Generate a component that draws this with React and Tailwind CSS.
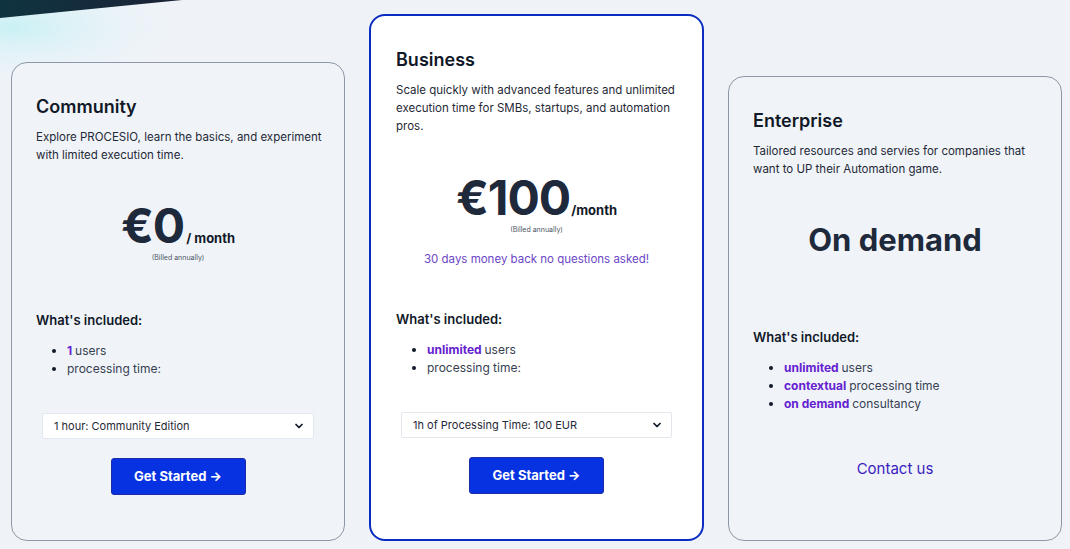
import { ChevronDown } from 'lucide-react';

const font = { fontFamily: 'Inter, "Noto Sans", sans-serif' };

function Select({ label }) {
  return (
    <div className="relative flex items-center h-[26px] bg-white border border-[#e3e7ee] rounded-[2px] pl-[11px] pr-[8px] text-[11px] text-[#1f2937]">
      <span className="flex-1">{label}</span>
      <ChevronDown className="w-[12px] h-[12px] text-[#111827]" strokeWidth={3.5} />
    </div>
  );
}

function Button() {
  return (
    <div className="flex justify-center">
      <button className="w-[135px] h-[37px] bg-[#0632e2] border border-[#1c2ca6] rounded-[3px] text-white text-[13px] font-bold">
        Get Started →
      </button>
    </div>
  );
}

function Included({ items }) {
  return (
    <>
      <h3 className="text-[13px] font-semibold text-[#111827] leading-[18px]">What's included:</h3>
      <ul className="list-disc pl-[31px] mt-[13px] text-[12px] leading-[18px] text-[#374151] marker:text-[#111827]">
        {items.map((it, i) => (
          <li key={i}>
            {it.bold && <span className="font-bold text-[#6421d0]">{it.bold} </span>}
            {it.text}
          </li>
        ))}
      </ul>
    </>
  );
}

export default function App() {
  return (
    <div style={font} className="relative w-[1070px] h-[549px] overflow-hidden bg-[#eff3f8]">
      {/* top-left decoration */}
      <svg className="absolute left-0 top-0" width="260" height="90" viewBox="0 0 260 90">
        <defs>
          <radialGradient id="glow" cx="0.05" cy="0.3" r="0.7">
            <stop offset="0" stopColor="#c9f1f5" />
            <stop offset="1" stopColor="#eff3f8" stopOpacity="0" />
          </radialGradient>
          <linearGradient id="dark" x1="0" y1="0" x2="1" y2="0">
            <stop offset="0" stopColor="#0f3440" />
            <stop offset="1" stopColor="#1b2236" />
          </linearGradient>
        </defs>
        <rect x="0" y="0" width="260" height="90" fill="url(#glow)" />
        <polygon points="0,0 182,0 0,18" fill="url(#dark)" />
      </svg>

      <div className="relative flex items-end gap-[24px] pl-[11px] pt-[14px]">
        {/* Community */}
        <div className="w-[334px] h-[479px] rounded-[16px] border border-[#8d97a6] bg-[#f0f4f9] pl-[24px] pr-[24px] pt-[32px]">
          <h2 className="text-[18px] font-semibold text-[#111827] leading-[24px]">Community</h2>
          <p className="mt-[9px] mr-[-12px] text-[11.5px] leading-[18px] text-[#1f2937]">
            Explore PROCESIO, learn the basics, and experiment with limited execution time.
          </p>
          <div className="mt-[38px] flex justify-center items-baseline text-[#1e293b]">
            <span className="text-[48px] font-bold leading-[48px] tracking-[-1px]">€0</span>
            <span className="text-[13px] font-bold leading-[14px] text-[#111827] ml-[2px]">/ month</span>
          </div>
          <p className="text-center text-[7px] text-[#4b5563] leading-[10px] mt-[3px]">(Billed annually)</p>
          <div className="mt-[48px]">
            <Included items={[{ bold: '1', text: 'users' }, { text: 'processing time:' }]} />
          </div>
          <div className="mt-[35px] px-[6px]">
            <Select label="1 hour: Community Edition" />
          </div>
          <div className="mt-[19px]">
            <Button />
          </div>
        </div>

        {/* Business */}
        <div className="w-[335px] h-[527px] rounded-[16px] border-2 border-[#0a2cc0] bg-white px-[25px] pt-[32px]">
          <h2 className="text-[18px] font-semibold text-[#111827] leading-[24px]">Business</h2>
          <p className="mt-[9px] text-[11.5px] leading-[18px] text-[#1f2937]">
            Scale quickly with advanced features and unlimited execution time for SMBs, startups, and automation pros.
          </p>
          <div className="mt-[39px] flex justify-center items-baseline text-[#1e293b]">
            <span className="text-[48px] font-bold leading-[48px] tracking-[-1px]">€100</span>
            <span className="text-[13px] font-bold leading-[14px] text-[#111827] ml-[1px]">/month</span>
          </div>
          <p className="text-center text-[7px] text-[#4b5563] leading-[10px] mt-[3px]">(Billed annually)</p>
          <p className="text-center text-[11.5px] text-[#6b45c6] leading-[18px] mt-[15px]">
            30 days money back no questions asked!
          </p>
          <div className="mt-[42px]">
            <Included items={[{ bold: 'unlimited', text: 'users' }, { text: 'processing time:' }]} />
          </div>
          <div className="mt-[35px] px-[5px]">
            <Select label="1h of Processing Time: 100 EUR" />
          </div>
          <div className="mt-[19px]">
            <Button />
          </div>
        </div>

        {/* Enterprise */}
        <div className="w-[334px] h-[465px] rounded-[16px] border border-[#8d97a6] bg-[#f0f4f9] px-[24px] pt-[32px]">
          <h2 className="text-[18px] font-semibold text-[#111827] leading-[24px]">Enterprise</h2>
          <p className="mt-[9px] text-[11.5px] leading-[18px] text-[#1f2937]">
            Tailored resources and servies for companies that want to UP their Automation game.
          </p>
          <div className="mt-[42px] text-center text-[31px] font-bold text-[#1e293b] leading-[40px]">On demand</div>
          <div className="mt-[68px]">
            <Included
              items={[
                { bold: 'unlimited', text: 'users' },
                { bold: 'contextual', text: 'processing time' },
                { bold: 'on demand', text: 'consultancy' },
              ]}
            />
          </div>
          <div className="mt-[46px] text-center text-[15px] text-[#3a1cbf] leading-[20px]">Contact us</div>
        </div>
      </div>
    </div>
  );
}
